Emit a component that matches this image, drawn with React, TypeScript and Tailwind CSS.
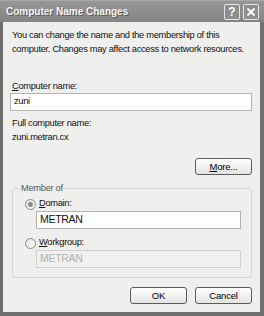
import React from "react";

const font = { fontFamily: '"Liberation Sans", Arial, sans-serif' };

function XpButton({ children, className = "" }: { children: React.ReactNode; className?: string }) {
  return (
    <button
      className={`h-[17px] w-[57px] rounded-[3px] border border-[#5c5c5c] bg-gradient-to-b from-[#ffffff] to-[#e4e4e2] text-[9.5px] leading-none tracking-[-0.2px] text-black ${className}`}
    >
      {children}
    </button>
  );
}

function Radio({ checked }: { checked?: boolean }) {
  return (
    <span className="flex h-[11px] w-[11px] items-center justify-center rounded-full border border-[#8a8a8a] bg-gradient-to-br from-[#e2e2e2] to-white">
      {checked && <span className="h-[5px] w-[5px] rounded-full bg-[#8c8c8c]" />}
    </span>
  );
}

export default function App() {
  return (
    <div
      style={font}
      className="flex h-[316px] w-[264px] flex-col overflow-hidden bg-[#6f6f6f]"
    >
      {/* title bar */}
      <div className="flex h-[22px] shrink-0 items-center justify-between border-t border-[#a8a8a8] bg-gradient-to-b from-[#969696] to-[#858585] pl-[6px] pr-[5px]">
        <span className="text-[10px] font-bold text-[#f4f4f4] [text-shadow:1px_1px_0_#5a5a5a]">
          Computer Name Changes
        </span>
        <div className="flex gap-[3px]">
          <span className="flex h-[16px] w-[16px] items-center justify-center rounded-[2px] border border-[#e6e6e6] bg-[#8e8e8e] text-[12px] font-bold leading-none text-white">
            ?
          </span>
          <span className="flex h-[16px] w-[16px] items-center justify-center rounded-[2px] border border-[#e6e6e6] bg-[#8e8e8e]">
            <svg width="10" height="10" viewBox="0 0 10 10">
              <path d="M1.5 1.5 L8.5 8.5 M8.5 1.5 L1.5 8.5" stroke="#fff" strokeWidth="1.8" />
            </svg>
          </span>
        </div>
      </div>

      {/* body */}
      <div className="mb-[4px] ml-[3px] mr-[4px] flex flex-1 flex-col bg-[#efefee] pl-[7px] text-[9.3px] tracking-[-0.3px] text-[#111]">
        <p className="mt-[6px] whitespace-nowrap pl-[2px] leading-[14px]">
          You can change the name and the membership of this
          <br />
          computer. Changes may affect access to network resources.
        </p>

        <div className="mt-[23px] pl-[2px] leading-[14px]">
          <span className="underline">C</span>omputer name:
        </div>
        <div className="flex h-[18px] w-[242px] items-center border border-[#b3b3b3] bg-white px-[3px]">
          zuni
        </div>

        <div className="mt-[5px] pl-[2px] leading-[14px]">Full computer name:</div>
        <div className="pl-[2px] leading-[14px]">zuni.metran.cx</div>

        <div className="mt-[14px] flex w-[242px] justify-end">
          <XpButton>
            <span className="underline">M</span>ore...
          </XpButton>
        </div>

        {/* group box */}
        <div className="relative ml-[2px] mt-[13px] h-[90px] w-[240px] rounded-[3px] border border-[#d6d6d4]">
          <span className="absolute -top-[7px] left-[6px] bg-[#efefee] px-[2px] leading-[12px] text-[#555]">
            Member of
          </span>
          <div className="ml-[12px] mt-[8px] flex h-[14px] items-center gap-[3px]">
            <Radio checked />
            <span>
              <span className="underline">D</span>omain:
            </span>
          </div>
          <div className="ml-[23px] flex h-[18px] w-[205px] items-center border border-[#b3b3b3] bg-white px-[3px] text-[10.5px]">
            METRAN
          </div>
          <div className="ml-[12px] mt-[7px] flex h-[14px] items-center gap-[3px]">
            <Radio />
            <span>
              <span className="underline">W</span>orkgroup:
            </span>
          </div>
          <div className="ml-[23px] flex h-[18px] w-[205px] items-center border border-[#cfcfcf] bg-[#f1f1f0] px-[3px] text-[10.5px] text-[#b0b0b0]">
            METRAN
          </div>
        </div>

        <div className="mt-[9px] flex w-[242px] justify-end gap-[8px]">
          <XpButton>OK</XpButton>
          <XpButton>Cancel</XpButton>
        </div>
      </div>
    </div>
  );
}
